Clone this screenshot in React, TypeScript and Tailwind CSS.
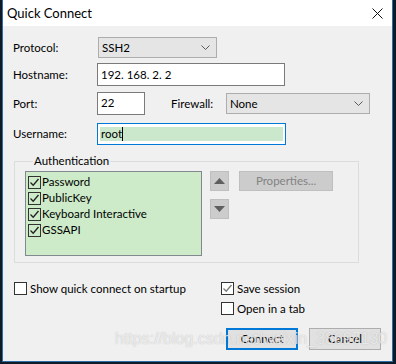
import React from 'react';

const font = { fontFamily: 'Lato, "Noto Sans", "Liberation Sans", sans-serif' };

function Chevron() {
  return (
    <svg width="9" height="6" viewBox="0 0 9 6" fill="none" aria-hidden="true">
      <path d="M0.5 0.5L4.5 4.5L8.5 0.5" stroke="#5a5a5a" strokeWidth="1" />
    </svg>
  );
}

function Check({ color = '#222' }: { color?: string }) {
  return (
    <svg width="11" height="11" viewBox="0 0 11 11" fill="none" aria-hidden="true">
      <path d="M1.5 5.5L4.2 8.2L9.5 2" stroke={color} strokeWidth="1.3" />
    </svg>
  );
}

function Box({ checked, tone = 'dark', bg = 'bg-white' }: { checked?: boolean; tone?: 'dark' | 'gray'; bg?: string }) {
  return (
    <span className={`w-[13px] h-[13px] border border-[#333333] ${bg} flex items-center justify-center shrink-0`}>
      {checked && <Check color={tone === 'dark' ? '#222' : '#7a7a7a'} />}
    </span>
  );
}

export default function App() {
  const authItems = ['Password', 'PublicKey', 'Keyboard Interactive', 'GSSAPI'];

  return (
    <div className="w-[396px] h-[364px] bg-[#0e1a26] flex pl-[2px] pr-[3px] pb-[2px] relative" style={font}>
      <div className="flex-1 flex flex-col bg-[#f0f0f0] border-x border-b border-[#2f6ca8] text-[11.5px] text-black">
        {/* Title bar */}
        <div className="h-[26px] bg-white flex items-center justify-between pl-[4px] pr-[9px]">
          <span className="text-[13px] leading-none">Quick Connect</span>
          <svg width="11" height="11" viewBox="0 0 11 11" aria-hidden="true">
            <path d="M0.5 0.5L10.5 10.5M10.5 0.5L0.5 10.5" stroke="#111" strokeWidth="1" />
          </svg>
        </div>

        <div className="flex flex-col pl-[10px] pr-[11px] pt-[11px]">
          {/* Protocol */}
          <div className="flex items-center h-[21px]">
            <span className="w-[85px]">Protocol:</span>
            <div className="w-[119px] h-[21px] bg-[#e5e5e5] border border-[#adadad] flex items-center justify-between pl-[3px] pr-[6px]">
              <span>SSH2</span>
              <Chevron />
            </div>
          </div>

          {/* Hostname */}
          <div className="flex items-center h-[23px] mt-[5px]">
            <span className="w-[84px]">Hostname:</span>
            <div className="w-[188px] h-[23px] bg-white border border-[#7a7a7a] flex items-center pl-[3px]">
              <span>192.&nbsp;168.&nbsp;2.&nbsp;2</span>
            </div>
          </div>

          {/* Port / Firewall */}
          <div className="flex items-center h-[23px] mt-[6px]">
            <span className="w-[84px]">Port:</span>
            <div className="w-[48px] h-[23px] bg-white border border-[#7a7a7a] flex items-start pl-[3px] pt-[1px]">
              <span>22</span>
            </div>
            <span className="ml-[26px] w-[55px]">Firewall:</span>
            <div className="w-[144px] h-[21px] bg-[#e5e5e5] border border-[#adadad] flex items-center justify-between pl-[3px] pr-[6px]">
              <span>None</span>
              <Chevron />
            </div>
          </div>

          {/* Username */}
          <div className="flex items-center h-[22px] mt-[8px]">
            <span className="w-[84px]">Username:</span>
            <div className="w-[189px] h-[22px] bg-white border border-[#0078d7] flex items-center px-[2px]">
              <div className="flex-1 h-[14px] bg-[#cce8cc] flex items-center pl-[1px]">
                <span>root</span>
                <span className="w-[1px] h-[14px] bg-black" />
              </div>
            </div>
          </div>

          {/* Authentication */}
          <fieldset className="mt-[9px] ml-[1px] w-[345px] border border-[#dcdcdc] pl-[10px] pb-[6px] pt-[3px]">
            <legend className="ml-[8px] px-[1px] leading-[14px]">Authentication</legend>
            <div className="flex items-start">
              <div className="w-[177px] h-[85px] bg-[#cdebc9] border border-[#828790] pt-[2px] pl-[2px] flex flex-col">
                {authItems.map((item) => (
                  <div key={item} className="flex items-center h-[16px]">
                    <Box checked bg="bg-[#cdebc9]" />
                    <span className="ml-[1px]">{item}</span>
                  </div>
                ))}
              </div>
              <div className="flex flex-col gap-[8px] ml-[8px]">
                <div className="w-[19px] h-[20px] bg-[#cccccc] border border-[#bfbfbf] flex items-center justify-center">
                  <svg width="11" height="6" viewBox="0 0 11 6" aria-hidden="true">
                    <path d="M5.5 0L11 6H0Z" fill="#5f5f5f" />
                  </svg>
                </div>
                <div className="w-[19px] h-[20px] bg-[#cccccc] border border-[#bfbfbf] flex items-center justify-center">
                  <svg width="11" height="6" viewBox="0 0 11 6" aria-hidden="true">
                    <path d="M0 0H11L5.5 6Z" fill="#5f5f5f" />
                  </svg>
                </div>
              </div>
              <div className="w-[94px] h-[20px] ml-[10px] bg-[#cccccc] border border-[#bfbfbf] flex items-center justify-center text-[#838383]">
                Properties...
              </div>
            </div>
          </fieldset>

          {/* Options */}
          <div className="flex mt-[19px] ml-[1px]">
            <div className="w-[207px] flex items-center h-[13px]">
              <Box />
              <span className="ml-[3px]">Show quick connect on startup</span>
            </div>
            <div className="flex flex-col gap-[7px]">
              <div className="flex items-center h-[13px]">
                <Box checked tone="gray" />
                <span className="ml-[3px]">Save session</span>
              </div>
              <div className="flex items-center h-[13px]">
                <Box />
                <span className="ml-[3px]">Open in a tab</span>
              </div>
            </div>
          </div>

          {/* Buttons */}
          <div className="flex justify-end gap-[11px] mt-[13px]">
            <button className="w-[72px] h-[22px] bg-[#e1e1e1] border-2 border-[#0078d7] flex items-center justify-center">
              Connect
            </button>
            <button className="w-[72px] h-[22px] bg-[#e1e1e1] border border-[#adadad] flex items-center justify-center">
              Cancel
            </button>
          </div>
        </div>
      </div>

      {/* Watermark overlay */}
      <span
        className="absolute left-[115px] top-[331px] text-[16px] leading-none text-white/70 pointer-events-none"
        style={{ fontFamily: '"Liberation Sans", sans-serif', textShadow: '0 0 1px rgba(120,120,120,0.5)' }}
      >
        https://blog.csdn.net/weixin_38697130
      </span>
    </div>
  );
}
